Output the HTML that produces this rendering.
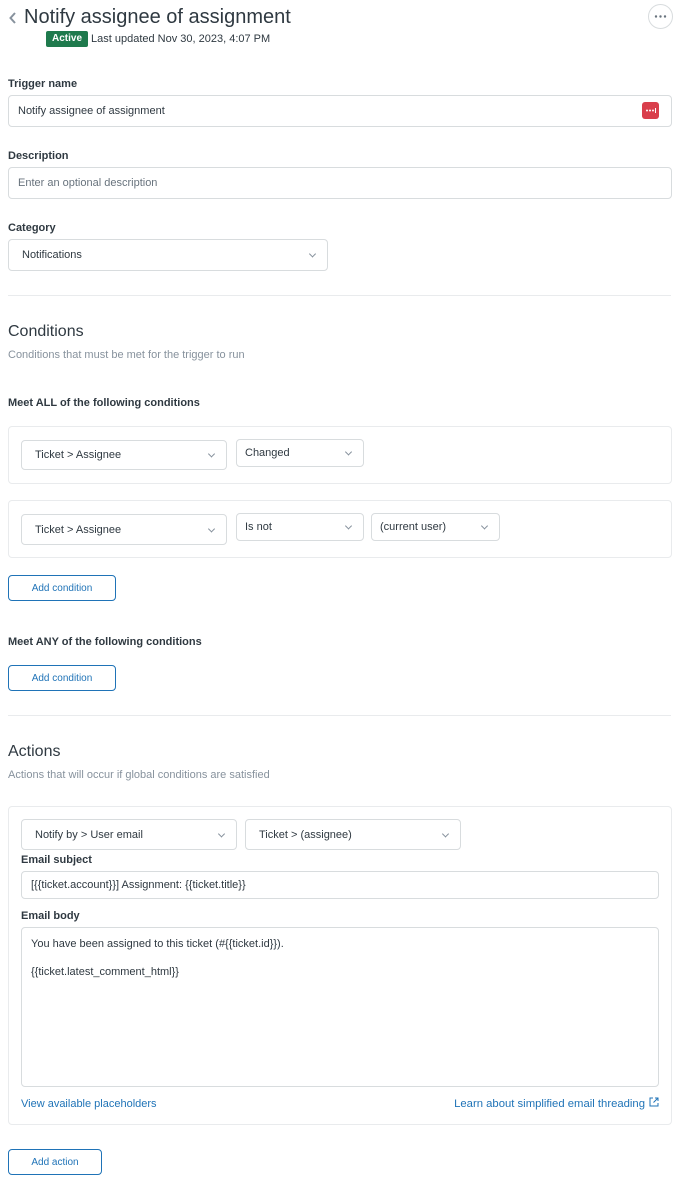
<!DOCTYPE html>
<html><head><meta charset="utf-8"><style>
*{box-sizing:border-box;margin:0;padding:0}
body{width:685px;height:1187px;background:#fff;font-family:"Liberation Sans",sans-serif;color:#2f3941;position:relative;overflow:hidden}
.a{position:absolute;white-space:nowrap}
.lbl{font-size:11px;font-weight:bold;color:#2f3941}
.inp{position:absolute;border:1px solid #d8dcde;border-radius:4px;font-size:11px;color:#2f3941;padding-left:9px;display:flex;align-items:center;background:#fff}
.sel::after{content:"";position:absolute;right:12px;top:50%;width:4px;height:4px;border-right:1px solid #87929d;border-bottom:1px solid #87929d;transform:translateY(-70%) rotate(45deg)}
.box{position:absolute;border:1px solid #e9ebed;border-radius:4px}
.btn{position:absolute;border:1px solid #1f73b7;border-radius:4px;color:#1f73b7;font-size:10px;display:flex;align-items:center;justify-content:center}
.hr{position:absolute;left:8px;width:663px;height:1px;background:#e9ebed}
.h2{font-size:16px;color:#2f3941}
.sub{font-size:11px;color:#87929d}
.link{font-size:11px;color:#1f73b7}
</style></head><body>
<svg class="a" style="left:8px;top:11px" width="10" height="14" viewBox="0 0 10 14"><path d="M7 2L2.5 7L7 12" stroke="#87929d" stroke-width="2" fill="none"/></svg>
<div class="a" style="left:24px;top:6px;font-size:20px;color:#2f3941">Notify assignee of assignment</div>
<div class="a" style="left:648px;top:4px;width:25px;height:25px;border:1px solid #d8dcde;border-radius:50%"></div>
<svg class="a" style="left:648px;top:4px" width="25" height="25"><circle cx="8" cy="12.5" r="1.2" fill="#68737d"/><circle cx="12.5" cy="12.5" r="1.2" fill="#68737d"/><circle cx="17" cy="12.5" r="1.2" fill="#68737d"/></svg>
<div class="a" style="left:46px;top:31px;width:42px;height:16px;background:#1f7a4d;color:#fff;font-size:10px;font-weight:bold;text-align:center;line-height:16px;border-radius:2px">Active</div>
<div class="a" style="left:91px;top:33px;font-size:11px">Last updated Nov 30, 2023, 4:07 PM</div>

<div class="a lbl" style="left:8px;top:78px">Trigger name</div>
<div class="inp" style="left:8px;top:95px;width:664px;height:32px">Notify assignee of assignment</div>
<div class="a" style="left:642px;top:102px;width:17px;height:17px;background:#d93f4c;border-radius:3px"></div>
<svg class="a" style="left:642px;top:102px" width="17" height="17"><circle cx="5" cy="8.5" r="1" fill="#fff"/><circle cx="8" cy="8.5" r="1" fill="#fff"/><circle cx="11" cy="8.5" r="1" fill="#fff"/><rect x="13" y="6" width="1" height="5" fill="#fff"/></svg>

<div class="a lbl" style="left:8px;top:150px">Description</div>
<div class="inp" style="left:8px;top:167px;width:664px;height:32px;color:#68737d">Enter an optional description</div>

<div class="a lbl" style="left:8px;top:222px">Category</div>
<div class="inp sel" style="left:8px;top:239px;width:320px;height:32px;padding-left:13px">Notifications</div>

<div class="hr" style="top:295px"></div>
<div class="a h2" style="left:8px;top:323px">Conditions</div>
<div class="a sub" style="left:8px;top:349px">Conditions that must be met for the trigger to run</div>
<div class="a lbl" style="left:8px;top:397px">Meet ALL of the following conditions</div>

<div class="box" style="left:8px;top:426px;width:664px;height:58px"></div>
<div class="inp sel" style="left:21px;top:440px;width:206px;height:30px;padding-left:13px">Ticket &gt; Assignee</div>
<div class="inp sel" style="left:236px;top:439px;width:128px;height:28px;padding-left:8px">Changed</div>

<div class="box" style="left:8px;top:500px;width:664px;height:58px"></div>
<div class="inp sel" style="left:21px;top:514px;width:206px;height:31px;padding-left:13px">Ticket &gt; Assignee</div>
<div class="inp sel" style="left:236px;top:513px;width:128px;height:28px;padding-left:8px">Is not</div>
<div class="inp sel" style="left:371px;top:513px;width:129px;height:28px;padding-left:8px">(current user)</div>

<div class="btn" style="left:8px;top:575px;width:108px;height:26px">Add condition</div>
<div class="a lbl" style="left:8px;top:636px">Meet ANY of the following conditions</div>
<div class="btn" style="left:8px;top:665px;width:108px;height:26px">Add condition</div>

<div class="hr" style="top:715px"></div>
<div class="a h2" style="left:8px;top:743px">Actions</div>
<div class="a sub" style="left:8px;top:769px">Actions that will occur if global conditions are satisfied</div>

<div class="box" style="left:8px;top:806px;width:664px;height:319px"></div>
<div class="inp sel" style="left:21px;top:819px;width:216px;height:31px;padding-left:13px">Notify by &gt; User email</div>
<div class="inp sel" style="left:245px;top:819px;width:216px;height:31px;padding-left:13px">Ticket &gt; (assignee)</div>
<div class="a lbl" style="left:21px;top:854px">Email subject</div>
<div class="inp" style="left:21px;top:871px;width:638px;height:28px">[{{ticket.account}}] Assignment: {{ticket.title}}</div>
<div class="a lbl" style="left:21px;top:910px">Email body</div>
<div class="inp" style="left:21px;top:927px;width:638px;height:160px;display:block;padding-top:9px;line-height:14px">You have been assigned to this ticket (#{{ticket.id}}).<br><br>{{ticket.latest_comment_html}}</div>
<div class="a link" style="left:21px;top:1098px">View available placeholders</div>
<div class="a link" style="right:40px;top:1098px;font-size:11.3px">Learn about simplified email threading</div>
<svg class="a" style="left:649px;top:1097px" width="10" height="10" viewBox="0 0 10 10"><path d="M4 1H1v8h8V6M6 1h3v3M9 1L4.5 5.5" stroke="#1f73b7" fill="none"/></svg>

<div class="btn" style="left:8px;top:1149px;width:94px;height:26px">Add action</div>
</body></html>
